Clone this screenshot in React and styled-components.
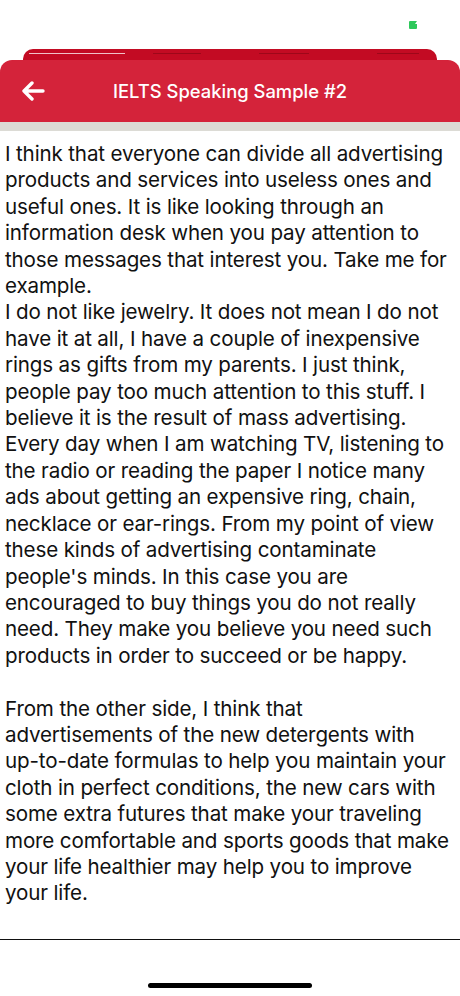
import React from "react";
import styled, { createGlobalStyle } from "styled-components";

const GlobalStyle = createGlobalStyle`
  html, body {
    margin: 0;
    padding: 0;
    background: #ffffff;
  }
  body {
    font-family: Inter, "Liberation Sans", Arial, sans-serif;
  }
`;

const Screen = styled.div`
  width: 460px;
  height: 996px;
  display: flex;
  flex-direction: column;
  background: #ffffff;
  overflow: hidden;
`;

const StatusBar = styled.div`
  height: 49px;
  display: flex;
  justify-content: flex-end;
  align-items: flex-start;
  padding: 21px 42px 0 0;
  box-sizing: border-box;
`;

const SheetStack = styled.div`
  display: flex;
  flex-direction: column;
  align-items: center;
`;

const BackSheet = styled.div`
  width: 414px;
  height: 11px;
  background: #c30b23;
  border-radius: 10px 10px 0 0;
  display: flex;
  align-items: flex-start;
  gap: 28px;
  padding: 4px 0 0 6px;
  box-sizing: border-box;
`;

const TabMark = styled.span`
  display: block;
  width: ${(p) => p.w}px;
  height: 1px;
  margin-left: ${(p) => p.offset || 0}px;
  background: ${(p) => (p.active ? "rgba(255,255,255,0.75)" : "rgba(90,0,10,0.35)")};
`;

const Header = styled.header`
  width: 100%;
  height: 62px;
  background: #d4233a;
  border-radius: 12px 12px 0 0;
  display: grid;
  grid-template-columns: 60px 1fr 60px;
  align-items: center;
`;

const BackButton = styled.button`
  border: none;
  background: transparent;
  padding: 0 0 0 21px;
  display: flex;
  align-items: center;
  cursor: pointer;
`;

const Title = styled.h1`
  margin: 0;
  text-align: center;
  color: #ffffff;
  font-size: 18.4px;
  font-weight: 500;
  letter-spacing: 0;
`;

const Strip = styled.div`
  height: 9px;
  background: #dcdbd5;
`;

const Body = styled.main`
  flex: 1;
  padding: 10px 0 0 5px;
`;

const Line = styled.span`
  display: block;
  white-space: nowrap;
  font-size: 20.6px;
  line-height: 26.4px;
  color: #111111;
  letter-spacing: -0.15px;
  height: ${(p) => (p.blank ? "26.4px" : "auto")};
`;

const Footer = styled.div`
  height: 57px;
  border-top: 1.5px solid #111111;
  display: flex;
  justify-content: center;
  align-items: flex-end;
  padding-bottom: 8px;
  box-sizing: border-box;
`;

const HomeBar = styled.div`
  width: 164px;
  height: 5px;
  border-radius: 3px;
  background: #000000;
`;

const lines = [
  "I think that everyone can divide all advertising",
  "products and services into useless ones and",
  "useful ones. It is like looking through an",
  "information desk when you pay attention to",
  "those messages that interest you. Take me for",
  "example.",
  "I do not like jewelry. It does not mean I do not",
  "have it at all, I have a couple of inexpensive",
  "rings as gifts from my parents. I just think,",
  "people pay too much attention to this stuff. I",
  "believe it is the result of mass advertising.",
  "Every day when I am watching TV, listening to",
  "the radio or reading the paper I notice many",
  "ads about getting an expensive ring, chain,",
  "necklace or ear-rings. From my point of view",
  "these kinds of advertising contaminate",
  "people's minds. In this case you are",
  "encouraged to buy things you do not really",
  "need. They make you believe you need such",
  "products in order to succeed or be happy.",
  "",
  "From the other side, I think that",
  "advertisements of the new detergents with",
  "up-to-date formulas to help you maintain your",
  "cloth in perfect conditions, the new cars with",
  "some extra futures that make your traveling",
  "more comfortable and sports goods that make",
  "your life healthier may help you to improve",
  "your life.",
];

export default function App() {
  return (
    <>
      <GlobalStyle />
      <Screen>
        <StatusBar>
          <svg width="9" height="8" viewBox="0 0 9 8">
            <path d="M0 1 Q0 0 1 0 H8 L6 3 L8 3 V7 Q8 8 7 8 H1 Q0 8 0 7 Z" fill="#2ec85b" />
          </svg>
        </StatusBar>
        <SheetStack>
          <BackSheet>
            <TabMark w={96} active />
            <TabMark w={48} />
            <TabMark w={50} offset={30} />
            <TabMark w={42} offset={40} />
          </BackSheet>
          <Header>
            <BackButton aria-label="Back">
              <svg width="24" height="20" viewBox="0 0 24 20">
                <path
                  d="M22 10 H3 M11 2 L3 10 L11 18"
                  fill="none"
                  stroke="#ffffff"
                  strokeWidth="3.4"
                  strokeLinecap="round"
                  strokeLinejoin="round"
                />
              </svg>
            </BackButton>
            <Title>IELTS Speaking Sample #2</Title>
            <span />
          </Header>
        </SheetStack>
        <Strip />
        <Body>
          {lines.map((l, i) => (
            <Line key={i} blank={l === ""}>
              {l}
            </Line>
          ))}
        </Body>
        <Footer>
          <HomeBar />
        </Footer>
      </Screen>
    </>
  );
}
